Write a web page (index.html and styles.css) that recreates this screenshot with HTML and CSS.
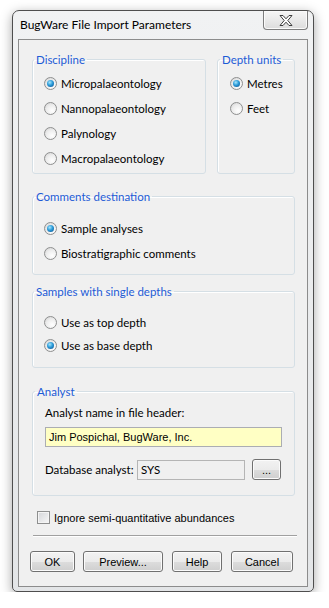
FILE: index.html
```html
<!DOCTYPE html>
<html lang="en">
<head>
    <meta charset="UTF-8">
    <title>BugWare File Import Parameters</title>
    <link rel="stylesheet" href="styles.css">
</head>
<body>
    <div class="window">
        <!-- Title bar -->
        <div class="titlebar">
            <span class="title">BugWare File Import Parameters</span>
            <button class="close">
                <svg width="14" height="11" viewBox="0 0 14 11">
                    <polygon points="1,0.5 4,0.5 7,3.8 10,0.5 13,0.5 8.8,5.5 13,10.5 10,10.5 7,7.2 4,10.5 1,10.5 5.2,5.5" fill="#fff" stroke="#3c3c3c" stroke-width="1" stroke-linejoin="round"/>
                </svg>
            </button>
        </div>

        <div class="client">
            <div class="top-row">
                <fieldset class="group discipline">
                    <legend>Discipline</legend>
                    <div class="option"><span class="radio on"></span>Micropalaeontology</div>
                    <div class="option"><span class="radio"></span>Nannopalaeontology</div>
                    <div class="option"><span class="radio"></span>Palynology</div>
                    <div class="option"><span class="radio"></span>Macropalaeontology</div>
                </fieldset>
                <fieldset class="group units">
                    <legend>Depth units</legend>
                    <div class="option"><span class="radio on"></span>Metres</div>
                    <div class="option"><span class="radio"></span>Feet</div>
                </fieldset>
            </div>

            <fieldset class="group comments">
                <legend>Comments destination</legend>
                <div class="option"><span class="radio on"></span>Sample analyses</div>
                <div class="option"><span class="radio"></span>Biostratigraphic comments</div>
            </fieldset>

            <fieldset class="group samples">
                <legend>Samples with single depths</legend>
                <div class="option"><span class="radio"></span>Use as top depth</div>
                <div class="option"><span class="radio on"></span>Use as base depth</div>
            </fieldset>

            <fieldset class="group analyst">
                <legend>Analyst</legend>
                <div class="field-label">Analyst name in file header:</div>
                <div class="textbox name">Jim Pospichal, BugWare, Inc.</div>
                <div class="db-row">
                    <span class="db-label">Database analyst:</span>
                    <div class="textbox db">SYS</div>
                    <button class="btn dots">...</button>
                </div>
            </fieldset>

            <div class="check-row"><span class="checkbox"></span>Ignore semi-quantitative abundances</div>

            <div class="separator"></div>

            <div class="buttons">
                <button class="btn ok">OK</button>
                <button class="btn preview">Preview...</button>
                <button class="btn help">Help</button>
                <button class="btn cancel">Cancel</button>
            </div>
        </div>
    </div>
</body>
</html>
```

FILE: styles.css
```css
* {
    margin: 0;
    padding: 0;
    box-sizing: border-box;
}

body {
    background: #fff;
    font-family: Lato, "Noto Sans", sans-serif;
    font-size: 11.5px;
    color: #000;
    padding: 10px 0 0 12px;
    white-space: nowrap;
}

.window {
    width: 302px;
    height: 582px;
    border: 1px solid #4e4e4e;
    border-radius: 7px 7px 5px 5px;
    background: linear-gradient(#f1f2f3, #e3e5e7);
    box-shadow: 0 3px 12px rgba(0, 0, 0, 0.35);
    padding: 0 5px 4px;
    display: flex;
    flex-direction: column;
}

.titlebar {
    height: 28px;
    display: flex;
    justify-content: space-between;
    align-items: flex-start;
}

.title {
    margin: 6px 0 0 2px;
    line-height: 15px;
    font-size: 12px;
}

.close {
    width: 45px;
    height: 19px;
    border: 1px solid #7d7d7d;
    border-top: none;
    border-radius: 0 0 4px 4px;
    background: linear-gradient(#f6f6f6, #dcdcdc);
    box-shadow: inset 0 0 0 1px #fafafa;
    display: flex;
    align-items: center;
    justify-content: center;
}

.client {
    flex: 1;
    border: 1px solid #8c8c8c;
    background: #f0f0f0;
    padding-top: 12px;
    display: flex;
    flex-direction: column;
}

.top-row {
    display: flex;
    gap: 11px;
    margin: 0 12px 0 13px;
}

.group {
    border: 1px solid #d5dfe5;
    border-radius: 3px;
    box-shadow: inset 1px 1px 0 #fff;
}

/* legend sits at the content edge, so pull it back over the padding */
.group legend {
    margin-left: -10px;
    padding: 0 2px;
    line-height: 15px;
    color: #1d5bd6;
}

.units legend,
.analyst legend {
    margin-left: -10px;
}

.discipline {
    width: 174px;
    padding: 4px 0 2px 11px;
}

.units {
    flex: 1;
    padding: 4px 0 2px 12px;
}

.option {
    height: 25px;
    display: flex;
    align-items: center;
    gap: 4px;
}

.radio {
    flex: none;
    width: 13px;
    height: 13px;
    border-radius: 50%;
    border: 1px solid #8e8f8f;
    background: radial-gradient(circle at 65% 70%, #ffffff, #ececec 55%, #cdcdcd);
    display: flex;
    align-items: center;
    justify-content: center;
}

.radio.on::after {
    content: "";
    width: 7px;
    height: 7px;
    border-radius: 50%;
    background: radial-gradient(circle at 40% 35%, #a8e6fb, #2b9bd9 45%, #0b4f8c 95%);
}

.comments,
.samples,
.analyst {
    margin: 0 12px 0 13px;
}

.comments {
    margin-top: 15px;
    padding: 12px 0 8px 11px;
}

.samples {
    margin-top: 9px;
    padding: 12px 0 10px 11px;
}

.samples .option {
    height: 23px;
}

.analyst {
    margin-top: 16px;
    padding: 6px 12px 15px 12px;
}

.field-label {
    line-height: 15px;
}

.textbox {
    border: 1px solid #abadb3;
    height: 20px;
    padding-left: 3px;
    line-height: 18px;
}

.textbox.name {
    margin-top: 7px;
    background: #ffffc4;
    font-family: "Liberation Sans", sans-serif;
    font-size: 11px;
}

.db-row {
    margin-top: 12px;
    display: flex;
    align-items: center;
}

.db-label {
    flex: none;
    width: 92px;
}

.textbox.db {
    width: 108px;
    background: #f0f0f0;
    border-color: #b5b5b5;
}

.btn {
    height: 21px;
    border: 1px solid #707070;
    border-radius: 3px;
    background: linear-gradient(#f2f2f2 0%, #ebebeb 50%, #dddddd 51%, #cfcfcf 100%);
    box-shadow: inset 0 0 0 1px #fbfbfb;
    font-family: "Liberation Sans", sans-serif;
    font-size: 11px;
    color: #000;
}

.dots {
    width: 29px;
    margin-left: 7px;
}

.check-row {
    margin: 15px 0 0 18px;
    height: 13px;
    display: flex;
    align-items: center;
    gap: 4px;
    font-family: "Liberation Sans", sans-serif;
    font-size: 11px;
}

.checkbox {
    width: 13px;
    height: 13px;
    border: 1px solid #8e8f8f;
    background: linear-gradient(135deg, #d4d6d9, #f7f7f7);
    box-shadow: inset 0 0 0 1px #f4f4f4;
}

.separator {
    margin: 11px 10px 0 14px;
    border-top: 1px solid #a0a0a0;
    border-bottom: 1px solid #fff;
}

.buttons {
    margin: 14px 0 0 11px;
    display: flex;
}

.ok {
    width: 45px;
}

.preview {
    width: 80px;
    margin-left: 8px;
}

.help {
    width: 50px;
    margin-left: 9px;
}

.cancel {
    width: 62px;
    margin-left: 9px;
}
```
